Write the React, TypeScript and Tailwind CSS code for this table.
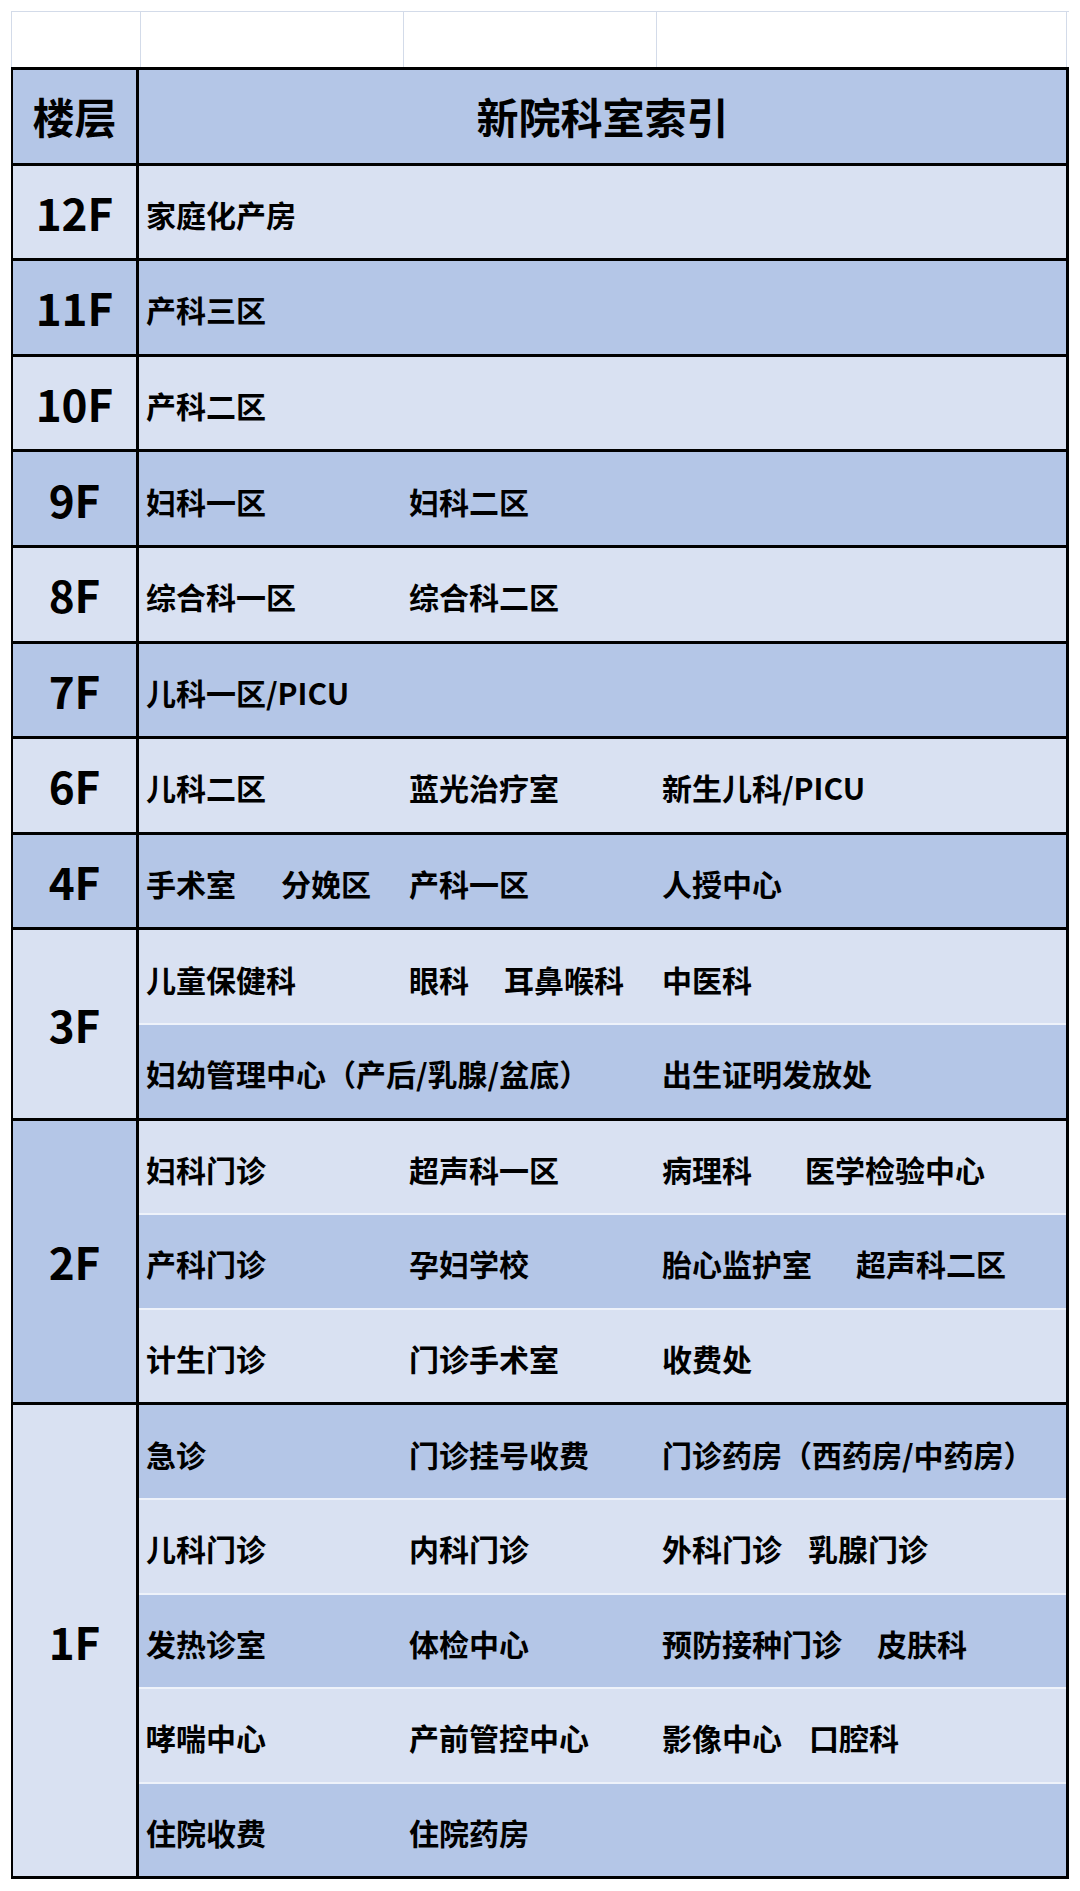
import React from "react";

const LIGHT = "bg-[#d9e1f2]";
const DARK = "bg-[#b4c6e7]";

type Item = { t: string; ml?: number };
type Cell = { items: Item[]; span?: boolean } | null;
type Row = { bg: string; cells: Cell[] };
type Floor = { label: string; bg: string; rows: Row[] };

const c = (...items: (string | Item)[]): Cell => ({
  items: items.map((i) => (typeof i === "string" ? { t: i } : i)),
});

const floors: Floor[] = [
  { label: "12F", bg: LIGHT, rows: [{ bg: LIGHT, cells: [c("家庭化产房")] }] },
  { label: "11F", bg: DARK, rows: [{ bg: DARK, cells: [c("产科三区")] }] },
  { label: "10F", bg: LIGHT, rows: [{ bg: LIGHT, cells: [c("产科二区")] }] },
  { label: "9F", bg: DARK, rows: [{ bg: DARK, cells: [c("妇科一区"), c("妇科二区")] }] },
  { label: "8F", bg: LIGHT, rows: [{ bg: LIGHT, cells: [c("综合科一区"), c("综合科二区")] }] },
  { label: "7F", bg: DARK, rows: [{ bg: DARK, cells: [c("儿科一区/PICU")] }] },
  {
    label: "6F",
    bg: LIGHT,
    rows: [{ bg: LIGHT, cells: [c("儿科二区"), c("蓝光治疗室"), c("新生儿科/PICU")] }],
  },
  {
    label: "4F",
    bg: DARK,
    rows: [
      {
        bg: DARK,
        cells: [c("手术室", { t: "分娩区", ml: 45 }), c("产科一区"), c("人授中心")],
      },
    ],
  },
  {
    label: "3F",
    bg: LIGHT,
    rows: [
      {
        bg: LIGHT,
        cells: [c("儿童保健科"), c("眼科", { t: "耳鼻喉科", ml: 35 }), c("中医科")],
      },
      {
        bg: DARK,
        cells: [{ items: [{ t: "妇幼管理中心（产后/乳腺/盆底）" }], span: true }, c("出生证明发放处")],
      },
    ],
  },
  {
    label: "2F",
    bg: DARK,
    rows: [
      { bg: LIGHT, cells: [c("妇科门诊"), c("超声科一区"), c("病理科", { t: "医学检验中心", ml: 53 })] },
      { bg: DARK, cells: [c("产科门诊"), c("孕妇学校"), c("胎心监护室", { t: "超声科二区", ml: 44 })] },
      { bg: LIGHT, cells: [c("计生门诊"), c("门诊手术室"), c("收费处")] },
    ],
  },
  {
    label: "1F",
    bg: LIGHT,
    rows: [
      { bg: DARK, cells: [c("急诊"), c("门诊挂号收费"), c("门诊药房（西药房/中药房）")] },
      { bg: LIGHT, cells: [c("儿科门诊"), c("内科门诊"), c("外科门诊", { t: "乳腺门诊", ml: 26 })] },
      { bg: DARK, cells: [c("发热诊室"), c("体检中心"), c("预防接种门诊", { t: "皮肤科", ml: 35 })] },
      { bg: LIGHT, cells: [c("哮喘中心"), c("产前管控中心"), c("影像中心", { t: "口腔科", ml: 27 })] },
      { bg: DARK, cells: [c("住院收费"), c("住院药房")] },
    ],
  },
];

function RowView({ row, first }: { row: Row; first: boolean }) {
  return (
    <div
      className={`flex items-center pl-[7px] pt-[4px] ${row.bg} ${
        first ? "h-[92.6px]" : "h-[94.6px] border-t-2 border-[#eef2fa]"
      }`}
    >
      <div className="grid grid-cols-[263px_253px_1fr] w-full text-[30px] font-bold leading-none text-black whitespace-nowrap">
        {row.cells.map((cell, i) =>
          cell ? (
            <div key={i} className={`flex ${cell.span ? "col-span-2" : ""}`}>
              {cell.items.map((it, j) => (
                <span key={j} style={it.ml ? { marginLeft: it.ml } : undefined}>
                  {it.t}
                </span>
              ))}
            </div>
          ) : (
            <div key={i} />
          )
        )}
      </div>
    </div>
  );
}

export default function App() {
  return (
    <div
      className="w-[1080px] h-[1891px] bg-white pt-[11px] pl-[11px]"
      style={{ fontFamily: '"Noto Sans CJK SC", "Noto Sans", sans-serif' }}
    >
      <div className="w-[1058px]">
        {/* spreadsheet strip above the table */}
        <div className="flex h-[56px] border-t border-l border-[#d3dbe9]">
          <div className="w-[129px] border-r border-[#d3dbe9]" />
          <div className="w-[263px] border-r border-[#d3dbe9]" />
          <div className="w-[253px] border-r border-[#d3dbe9]" />
          <div className="w-[410px] border-r border-[#d3dbe9]" />
        </div>

        <div className="border-t-[3px] border-l-2 border-r-[3px] border-b-[3px] border-black">
          {/* header */}
          <div className={`flex h-[95.6px] border-b-[3px] border-black ${DARK}`}>
            <div className="w-[126px] border-r-[3px] border-black flex items-center justify-center text-[42px] font-bold leading-none">
              楼层
            </div>
            <div className="flex-1 flex items-center justify-center text-[42px] font-bold leading-none">
              新院科室索引
            </div>
          </div>

          {floors.map((f, fi) => (
            <div
              key={f.label}
              className={`flex ${fi < floors.length - 1 ? "border-b-[3px] border-black" : ""}`}
            >
              <div
                className={`w-[126px] shrink-0 border-r-[3px] border-black flex items-center justify-center text-[44px] font-bold leading-none ${f.bg}`}
              >
                {f.label}
              </div>
              <div className="flex-1 flex flex-col">
                {f.rows.map((r, ri) => (
                  <RowView key={ri} row={r} first={ri === 0} />
                ))}
              </div>
            </div>
          ))}
        </div>
      </div>
    </div>
  );
}
